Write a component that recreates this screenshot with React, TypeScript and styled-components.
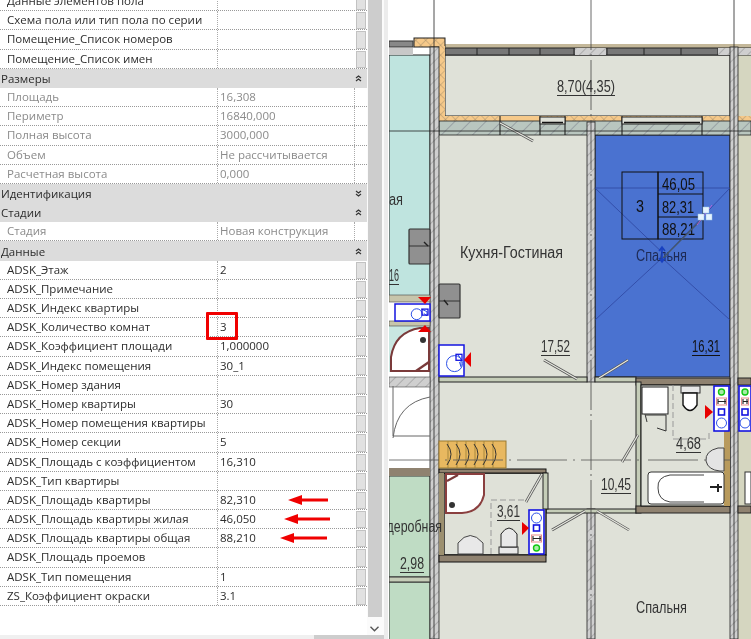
import React from "react";
import styled, { createGlobalStyle } from "styled-components";

type Row = { name: string; value?: string; muted?: boolean };
type Section = { title?: string; collapsed?: boolean; rows?: Row[]; button?: boolean };

const sections: Section[] = [
  {
    button: true,
    rows: [
      { name: "Данные элементов пола" },
      { name: "Схема пола или тип пола по серии" },
      { name: "Помещение_Список номеров" },
      { name: "Помещение_Список имен" },
    ],
  },
  {
    title: "Размеры",
    rows: [
      { name: "Площадь", value: "16,308", muted: true },
      { name: "Периметр", value: "16840,000", muted: true },
      { name: "Полная высота", value: "3000,000", muted: true },
      { name: "Объем", value: "Не рассчитывается", muted: true },
      { name: "Расчетная высота", value: "0,000", muted: true },
    ],
  },
  { title: "Идентификация", collapsed: true },
  { title: "Стадии", rows: [{ name: "Стадия", value: "Новая конструкция", muted: true }] },
  {
    title: "Данные",
    button: true,
    rows: [
      { name: "ADSK_Этаж", value: "2" },
      { name: "ADSK_Примечание" },
      { name: "ADSK_Индекс квартиры" },
      { name: "ADSK_Количество комнат", value: "3" },
      { name: "ADSK_Коэффициент площади", value: "1,000000" },
      { name: "ADSK_Индекс помещения", value: "30_1" },
      { name: "ADSK_Номер здания" },
      { name: "ADSK_Номер квартиры", value: "30" },
      { name: "ADSK_Номер помещения квартиры" },
      { name: "ADSK_Номер секции", value: "5" },
      { name: "ADSK_Площадь с коэффициентом", value: "16,310" },
      { name: "ADSK_Тип квартиры" },
      { name: "ADSK_Площадь квартиры", value: "82,310" },
      { name: "ADSK_Площадь квартиры жилая", value: "46,050" },
      { name: "ADSK_Площадь квартиры общая", value: "88,210" },
      { name: "ADSK_Площадь проемов" },
      { name: "ADSK_Тип помещения", value: "1" },
      { name: "ZS_Коэффициент окраски", value: "3.1" },
    ],
  },
];

const arrows = [
  { top: 494, left: 288, width: 40 },
  { top: 513, left: 284, width: 46 },
  { top: 532, left: 280, width: 47 },
];

const GlobalStyle = createGlobalStyle`
  html, body {
    margin: 0;
    padding: 0;
    width: 751px;
    height: 639px;
    overflow: hidden;
    background: #fff;
  }
`;

const Page = styled.div`
  position: relative;
  display: flex;
  width: 751px;
  height: 639px;
  overflow: hidden;
  font-family: "Open Sans", "Noto Sans", sans-serif;
  filter: blur(0.3px);
`;

const Palette = styled.div`
  display: flex;
  flex-direction: column;
  width: 384px;
  flex: none;
`;

const PaletteBody = styled.div`
  display: flex;
  flex: 1;
  min-height: 0;
`;

const Table = styled.div`
  width: 367px;
  flex: none;
  margin-top: -8px;
`;

const RowLine = styled.div`
  display: grid;
  grid-template-columns: 218px 136px 13px;
  height: 19.2px;
  box-sizing: border-box;
  border-bottom: 1px dotted #999;
`;

const NameCell = styled.div<{ $muted?: boolean }>`
  padding-left: 7px;
  font-size: 11.5px;
  line-height: 18px;
  white-space: nowrap;
  border-right: 1px dotted #aaa;
  color: ${(p) => (p.$muted ? "#8b8b8b" : "#2c2c2c")};
`;

const ValueCell = styled.div<{ $muted?: boolean }>`
  padding-left: 2px;
  font-size: 11.5px;
  line-height: 18px;
  white-space: nowrap;
  color: ${(p) => (p.$muted ? "#8b8b8b" : "#2c2c2c")};
`;

const ButtonCell = styled.div<{ $on?: boolean }>`
  box-sizing: border-box;
  margin: ${(p) => (p.$on ? "1px 1px 0 2px" : "0")};
  background: ${(p) => (p.$on ? "#e1e1e1" : "#fff")};
  border: ${(p) => (p.$on ? "1px solid #c2c2c2" : "none")};
  border-left: ${(p) => (p.$on ? "1px solid #c2c2c2" : "1px dotted #aaa")};
`;

const GroupHead = styled.div`
  display: flex;
  align-items: center;
  justify-content: space-between;
  height: 19.2px;
  padding: 0 5px 0 1px;
  box-sizing: border-box;
  background: #dcdcdc;
  font-size: 11.5px;
  color: #2c2c2c;
`;

const Track = styled.div`
  display: flex;
  flex-direction: column;
  width: 17px;
  flex: none;
  background: #fbfbfb;
`;

const Thumb = styled.div`
  width: 14px;
  height: 617px;
  margin-left: 1px;
  background: #cdcdcd;
`;

const ArrowDown = styled.div`
  display: flex;
  justify-content: center;
  padding: 9px 3px 0 0;
`;

const BottomBar = styled.div`
  display: flex;
  justify-content: flex-end;
  height: 4px;
  flex: none;
  background: #f0f0f0;
`;

const BottomThumb = styled.div`
  width: 70px;
  background: #cdcdcd;
`;

const Gutter = styled.div`
  width: 4px;
  flex: none;
  background: #ececec;
  border-right: 1px solid #fff;
`;

const Plan = styled.svg`
  display: block;
  flex: 1;
  height: 639px;
`;

const Highlight = styled.div`
  position: absolute;
  left: 206px;
  top: 312px;
  width: 32px;
  height: 28px;
  box-sizing: border-box;
  border: 3px solid #f00000;
  border-radius: 1px;
`;

const RedArrow = styled.svg<{ $top: number; $left: number }>`
  position: absolute;
  top: ${(p) => p.$top}px;
  left: ${(p) => p.$left}px;
  height: 12px;
`;

const PlanLabel = styled.text<{ $size?: number; $fill?: string }>`
  font-family: "Liberation Sans", sans-serif;
  font-size: ${(p) => p.$size ?? 16}px;
  fill: ${(p) => p.$fill ?? "#333"};
`;

const Chevrons = ({ up }: { up: boolean }) => (
  <svg width="7" height="7" viewBox="0 0 7 7" fill="none" stroke="#333" strokeWidth="1.2">
    {up ? <path d="M1 3 L3.5 1 L6 3 M1 6 L3.5 4 L6 6" /> : <path d="M1 1 L3.5 3 L6 1 M1 4 L3.5 6 L6 4" />}
  </svg>
);

// narrow riser box: green fitting, comb of valves, small pipe block, big round trap
const Riser = ({ x, y, w = 15, h = 45, flip = false }: { x: number; y: number; w?: number; h?: number; flip?: boolean }) => (
  <g transform={`translate(${x} ${y})`}>
    <rect width={w} height={h} fill="#fff" stroke="#1414e0" strokeWidth="1.6" />
    <g transform={flip ? `translate(0 ${h}) scale(1 -1)` : undefined}>
      <circle cx={w / 2} cy={6} r={3} fill="#a8eca8" stroke="#12c812" strokeWidth="1.4" />
      <rect x={2.5} y={12} width={w - 5} height={7} fill="#fff" stroke="#e88c8c" />
      <path d={`M4 15.5 H${w - 3} M4 13 V18 M${w - 4} 13 V18`} stroke="#222" strokeWidth="1.1" />
      <rect x={w / 2 - 3} y={23} width={6} height={6} fill="#fff" stroke="#1414e0" strokeWidth="1.6" />
      <circle cx={w / 2} cy={h - 8} r={5} fill="#fff" stroke="#2c50e8" />
    </g>
  </g>
);

// wide riser box: big round trap with the pipe turning to the side
const WideRiser = ({ x, y, w, h }: { x: number; y: number; w: number; h: number }) => (
  <g transform={`translate(${x} ${y})`}>
    <rect width={w} height={h} fill="#fff" stroke="#1414e0" strokeWidth="1.5" />
    <circle cx={w * 0.62} cy={h * 0.6} r={Math.min(w, h) * 0.32} fill="none" stroke="#2c50e8" />
    <path d={`M${w * 0.75} ${h * 0.3} L${w - 3} ${h * 0.45} V${h * 0.7} L${w * 0.82} ${h * 0.55}`} fill="none" stroke="#2c50e8" />
    <rect x={w - 8} y={h * 0.3} width={6} height={6} fill="none" stroke="#1414e0" strokeWidth="1.3" />
  </g>
);

const RoomArea = ({ x, y, text, w, fill }: { x: number; y: number; text: string; w: number; fill?: string }) => (
  <g>
    <PlanLabel x={x} y={y} $fill={fill} textLength={w} lengthAdjust="spacingAndGlyphs">
      {text}
    </PlanLabel>
    <line x1={x} x2={x + w} y1={y + 3.5} y2={y + 3.5} stroke={fill ?? "#333"} strokeWidth="1" />
  </g>
);

const Door = ({ d }: { d: string }) => (
  <g fill="none">
    <path d={d} stroke="#555" strokeWidth="2.6" />
    <path d={d} stroke="#e8e9e1" strokeWidth="1.2" />
  </g>
);

const PlanDrawing = () => (
  <Plan viewBox="389 0 362 639" preserveAspectRatio="none">
    <defs>
      <pattern id="hatch" width="7" height="7" patternUnits="userSpaceOnUse" patternTransform="rotate(-45)">
        <rect width="7" height="7" fill="#cfcfcf" />
        <line x1="0" y1="0" x2="7" y2="0" stroke="#777" strokeWidth="0.8" />
      </pattern>
      <pattern id="hatch2" width="11" height="11" patternUnits="userSpaceOnUse" patternTransform="rotate(-45)">
        <rect width="11" height="11" fill="#b9c6bf" />
        <line x1="0" y1="0" x2="11" y2="0" stroke="#667" strokeWidth="0.8" />
      </pattern>
      <pattern id="cross" width="7" height="7" patternUnits="userSpaceOnUse" patternTransform="rotate(45)">
        <rect width="7" height="7" fill="#f6c98a" />
        <path d="M0 0 H7 M0 0 V7" stroke="#8a7a62" strokeWidth="0.7" />
      </pattern>
    </defs>

    <rect x="389" y="0" width="362" height="639" fill="#fff" />

    {/* rooms */}
    <rect x="389" y="55" width="41" height="243" fill="#bfe4df" stroke="#222" />
    <rect x="445" y="55" width="285" height="61" fill="#dfe1d8" stroke="#222" />
    <rect x="439" y="135" width="148" height="242" fill="#dfe1d8" />
    <rect x="595" y="135" width="135" height="242" fill="#4a72d0" stroke="#222" />
    <rect x="738" y="55" width="13" height="585" fill="#d5d6c0" />
    <rect x="439" y="382" width="197" height="127" fill="#dfe1d8" />
    <rect x="439" y="509" width="148" height="131" fill="#dfe1d8" />
    <rect x="595" y="513" width="135" height="130" fill="#dfe1d8" />
    <rect x="389" y="476" width="41" height="101" fill="#bfdcc4" stroke="#333" />
    <rect x="389" y="582" width="41" height="60" fill="#bfdcc4" stroke="#333" />
    <rect x="389" y="387" width="41" height="81" fill="#fff" />
    <rect x="389" y="326" width="41" height="46" fill="#c9e7e1" />

    {/* balcony edge and windows */}
    <rect x="389" y="41" width="24" height="6" fill="#888" stroke="#333" />
    <rect x="389" y="48" width="24" height="7" fill="#c8c8c8" />
    <rect x="445" y="44" width="306" height="4" fill="#c4b89a" />
    <rect x="445" y="48" width="306" height="7" fill="#777" stroke="#222" />
    <path d="M477 48 V55 M509 48 V55 M540 48 V55 M574 48 V55 M607 48 V55 M644 48 V55 M681 48 V55 M718 48 V55" stroke="#222" />
    <rect x="575" y="48" width="31" height="7" fill="url(#hatch)" />
    <rect x="718" y="48" width="33" height="7" fill="url(#hatch)" />

    {/* insulation */}
    <rect x="414" y="38" width="31" height="9" fill="url(#cross)" stroke="#222" />
    <rect x="439" y="46" width="6" height="74" fill="url(#cross)" />
    <rect x="439" y="116" width="312" height="6" fill="url(#cross)" />
    <rect x="500" y="116" width="40" height="6" fill="#f6c98a" />

    {/* outer wall under the balcony */}
    <rect x="439" y="121" width="312" height="14" fill="url(#hatch2)" stroke="#222" strokeWidth="0.8" />
    <path d="M500 116 V135 M540 116 V135 M565 116 V135 M622 116 V135 M702 116 V135" stroke="#111" />
    <rect x="540" y="117" width="25" height="7" fill="#dfe1d8" stroke="#222" />
    <rect x="622" y="117" width="80" height="7" fill="#dfe1d8" stroke="#222" />
    <path d="M542 122.5 H563 M624 122.5 H700" stroke="#111" strokeWidth="1.4" />
    <Door d="M500 123 L533 141" />

    {/* vertical walls */}
    <rect x="430" y="47" width="9" height="592" fill="url(#hatch)" stroke="#222" strokeWidth="0.8" />
    <rect x="587" y="122" width="8" height="260" fill="url(#hatch)" stroke="#222" strokeWidth="0.8" />
    <rect x="587" y="509" width="8" height="130" fill="url(#hatch)" stroke="#222" strokeWidth="0.8" />
    <rect x="730" y="47" width="8" height="592" fill="url(#hatch)" stroke="#222" strokeWidth="0.8" />

    {/* partitions */}
    <rect x="439" y="377" width="148" height="5" fill="#c5cdb8" stroke="#222" />
    <rect x="595" y="377" width="41" height="5" fill="#c5cdb8" stroke="#222" />
    <rect x="636" y="378" width="94" height="7" fill="#8f8270" stroke="#222" />
    <rect x="738" y="378" width="13" height="7" fill="#8f8270" stroke="#222" />
    <rect x="636" y="382" width="5" height="131" fill="#c5cdb8" stroke="#222" />
    <rect x="546" y="509" width="90" height="4" fill="#c5cdb8" stroke="#222" />
    <rect x="636" y="506" width="94" height="7" fill="#8f8270" stroke="#222" />
    <rect x="738" y="506" width="13" height="7" fill="#8f8270" stroke="#222" />
    <rect x="389" y="295" width="41" height="7" fill="#c7c5ab" stroke="#444" strokeWidth="0.6" />
    <rect x="389" y="321" width="41" height="5" fill="#c7c5ab" stroke="#444" strokeWidth="0.6" />
    <rect x="389" y="377" width="41" height="10" fill="url(#hatch)" stroke="#444" strokeWidth="0.6" />
    <rect x="389" y="468" width="41" height="8" fill="#8f8270" />
    <rect x="389" y="577" width="41" height="5" fill="#c5cdb8" stroke="#333" />

    {/* bathrooms */}
    <rect x="641" y="385" width="89" height="121" fill="#dfe1d8" stroke="#111" />
    <rect x="724" y="431" width="6" height="75" fill="#b89a5c" />
    <rect x="444" y="473" width="102" height="82" fill="#dfe1d8" stroke="#111" strokeWidth="1.4" />
    <rect x="439" y="555" width="107" height="7" fill="#8f8270" stroke="#111" />
    <rect x="439" y="469" width="107" height="4" fill="#8f8270" stroke="#111" />
    <rect x="439" y="473" width="5" height="82" fill="#9c9070" />
    <rect x="543" y="473" width="5" height="36" fill="#c5cdb8" stroke="#222" />

    {/* wardrobe */}
    <rect x="439" y="441" width="67" height="27" fill="#e8b860" stroke="#9a7a30" />
    <path d="M448 441 V468 M457 441 V468 M466 441 V468 M475 441 V468 M484 441 V468 M493 441 V468" stroke="#a8883c" />
    <path d="M447 444 q8 10 0 21 M456 444 q8 10 0 21 M465 444 q8 10 0 21 M474 444 q8 10 0 21 M483 444 q8 10 0 21 M492 444 q8 10 0 21" fill="none" stroke="#333" />

    {/* axes */}
    <path d="M434 0 V639 M734 0 V639" stroke="#222" strokeWidth="0.8" />
    <path d="M591 0 V639" stroke="#444" strokeWidth="0.8" strokeDasharray="50 4 2 4" />
    <path d="M389 131 H751" stroke="#222" strokeWidth="0.8" />
    <path d="M389 460 H641 M648 460 H730" stroke="#555" strokeWidth="0.8" strokeDasharray="50 6 2 6" />

    {/* wet zone dashes */}
    <path d="M491 554 V500 H528 M673 385 V439 H709 V431" fill="none" stroke="#999" strokeDasharray="6 3" />

    {/* fridge and stove blocks */}
    <g fill="#909090" stroke="#333" strokeWidth="1.2">
      <rect x="409" y="229" width="21" height="35" rx="1" />
      <rect x="439" y="284" width="21" height="34" rx="1" />
      <path d="M409 246 H430 M439 301 H460" />
    </g>
    <path d="M424 242 l4 4 M444 300 l4 5" stroke="#222" strokeWidth="1.4" />

    {/* door leaves */}
    <Door d="M544 360 L577 379" />
    <Door d="M599 378 L628 360" />
    <Door d="M622 462 L638 435" />
    <Door d="M526 502 L542 474" />
    <Door d="M552 530 L585 511" />
    <Door d="M597 511 L629 530" />

    {/* shower in the left flat */}
    <path d="M391 371 V357 Q395 332 420 328 H429 V371 Z" fill="#fff" stroke="#7a3a3a" strokeWidth="2" />
    <circle cx="423" cy="340" r="3" fill="#333" />
    <path d="M416 371 L429 362" stroke="#7a3a3a" strokeWidth="2.4" />
    <path d="M393 386 V436 H430 M393 438 Q397 403 430 397" fill="none" stroke="#666" />

    {/* shower in the small bathroom */}
    <path d="M446 474 H484 V495 Q480 512 462 513 H446 Z" fill="#fff" stroke="#8a3f3f" strokeWidth="2" />
    <circle cx="452" cy="505" r="3" fill="#333" />
    <path d="M447 481 L458 475" stroke="#7a3a3a" strokeWidth="2" />

    {/* sink and toilet, small bathroom */}
    <path d="M458 554 V543 Q470 528 483 543 V554 Z" fill="#e8e8e8" stroke="#444" />
    <rect x="499" y="547" width="19" height="7" fill="#e8e8e8" stroke="#333" />
    <path d="M501 547 V534 Q509 522 517 534 V547 Z" fill="#e8e8e8" stroke="#222" />

    {/* fixtures, right bathroom */}
    <rect x="642" y="387" width="26" height="27" fill="#fff" stroke="#222" />
    <path d="M645 414 L647 422 M646 415 H666 V431 L657 428" fill="none" stroke="#333" />
    <rect x="681" y="386" width="19" height="7" fill="#e8e8e8" stroke="#333" />
    <path d="M683 393 V405 Q690 416 697 405 V393 Z" fill="#fff" stroke="#111" strokeWidth="1.4" />
    <path d="M724 448 H718 Q705 451 706 461 Q708 470 720 471 H724 Z" fill="#e4e4e4" stroke="#444" />
    <rect x="648" y="472" width="76" height="32" rx="3" fill="#fff" stroke="#333" />
    <path d="M704 475 H670 Q657 477 658 488 Q658 500 670 502 H704" fill="none" stroke="#444" />
    <path d="M710 487 H722 M718 484 V492" stroke="#222" strokeWidth="2" />
    <rect x="745" y="472" width="6" height="32" fill="#fff" stroke="#333" />

    {/* risers */}
    <WideRiser x={395} y={304} w={35} h={17} />
    <WideRiser x={439} y={345} w={25} h={31} />
    <Riser x={529} y={510} h={44} flip />
    <Riser x={714} y={386} />
    <Riser x={739} y={386} w={12} />

    {/* red markers */}
    <g fill="#e80000">
      <path d="M418 297 H431 L425 304 Z" />
      <path d="M418 332 H431 L425 325 Z" />
      <path d="M464 360 L471 352 V367 Z" />
      <path d="M522 522 L529 528 L522 535 Z" />
      <path d="M705 405 L713 412 L705 419 Z" />
    </g>

    {/* blue room contents */}
    <path d="M595 188 L730 188 M595 188 L668 258 M730 188 L663 258 M595 320 L662 258 M730 320 L662 258" stroke="#2a3f9a" strokeWidth="0.7" fill="none" />
    <g fill="none" stroke="#111" strokeWidth="1">
      <rect x="622" y="172" width="36" height="67" />
      <rect x="658" y="172" width="45" height="67" />
      <path d="M658 194 H703 M658 217 H703" />
    </g>
    <PlanLabel x="636" y="212" $size={17} $fill="#111" textLength={8} lengthAdjust="spacingAndGlyphs">3</PlanLabel>
    <PlanLabel x="662" y="190" $fill="#111" textLength={33} lengthAdjust="spacingAndGlyphs">46,05</PlanLabel>
    <PlanLabel x="662" y="213" $fill="#111" textLength={32} lengthAdjust="spacingAndGlyphs">82,31</PlanLabel>
    <PlanLabel x="662" y="235" $fill="#111" textLength={33} lengthAdjust="spacingAndGlyphs">88,21</PlanLabel>
    <PlanLabel x="636" y="261" $fill="#1d2a55" textLength={51} lengthAdjust="spacingAndGlyphs">Спальня</PlanLabel>
    <path d="M663 258 L703 218" stroke="#44566c" strokeWidth="1.4" />
    <path d="M662 247 V262 M659 251 L662 247 L665 251 M659 258 L662 262 L665 258" stroke="#1840c0" strokeWidth="1.6" fill="none" />
    <path d="M712 205 L697 225" stroke="#d060e0" strokeWidth="0.8" />
    <g fill="#e6f4ff" stroke="#9cc4e0" strokeWidth="0.5">
      <rect x="703" y="207" width="6" height="6" />
      <rect x="698" y="214" width="6" height="6" />
      <rect x="706" y="214" width="6" height="6" />
    </g>

    {/* labels */}
    <RoomArea x={557} y={92} text="8,70(4,35)" w={58} />
    <PlanLabel x="460" y="258" textLength={103} lengthAdjust="spacingAndGlyphs">Кухня-Гостиная</PlanLabel>
    <PlanLabel x="389" y="205" textLength={14} lengthAdjust="spacingAndGlyphs">ая</PlanLabel>
    <RoomArea x={389} y={281} text="16" w={10} />
    <RoomArea x={541} y={352} text="17,52" w={29} />
    <RoomArea x={692} y={352} text="16,31" w={28} fill="#111" />
    <RoomArea x={601} y={490} text="10,45" w={30} />
    <RoomArea x={676} y={449} text="4,68" w={25} />
    <RoomArea x={497} y={517} text="3,61" w={23} />
    <PlanLabel x="367" y="532" textLength={75} lengthAdjust="spacingAndGlyphs">Гардеробная</PlanLabel>
    <RoomArea x={400} y={569} text="2,98" w={24} />
    <PlanLabel x="636" y="613" textLength={51} lengthAdjust="spacingAndGlyphs">Спальня</PlanLabel>
  </Plan>
);

export default function App() {
  return (
    <Page>
      <GlobalStyle />
      <Palette>
        <PaletteBody>
          <Table>
            {sections.map((section, i) => (
              <div key={i}>
                {section.title && (
                  <GroupHead>
                    {section.title}
                    <Chevrons up={!section.collapsed} />
                  </GroupHead>
                )}
                {section.rows?.map((row) => (
                  <RowLine key={row.name}>
                    <NameCell $muted={row.muted}>{row.name}</NameCell>
                    <ValueCell $muted={row.muted}>{row.value}</ValueCell>
                    <ButtonCell $on={section.button} />
                  </RowLine>
                ))}
              </div>
            ))}
          </Table>
          <Track>
            <Thumb />
            <ArrowDown>
              <svg width="9" height="6" viewBox="0 0 9 6" fill="none" stroke="#555" strokeWidth="1.4">
                <path d="M0.5 0.8 L4.5 4.8 L8.5 0.8" />
              </svg>
            </ArrowDown>
          </Track>
        </PaletteBody>
        <BottomBar>
          <BottomThumb />
        </BottomBar>
      </Palette>
      <Gutter />
      <PlanDrawing />
      <Highlight />
      {arrows.map((a) => (
        <RedArrow key={a.top} $top={a.top} $left={a.left} width={a.width} viewBox={`0 0 ${a.width} 12`}>
          <path d={`M0 6 L14 1 V4.6 H${a.width} V7.4 H14 V11 Z`} fill="#f00000" />
        </RedArrow>
      ))}
    </Page>
  );
}
